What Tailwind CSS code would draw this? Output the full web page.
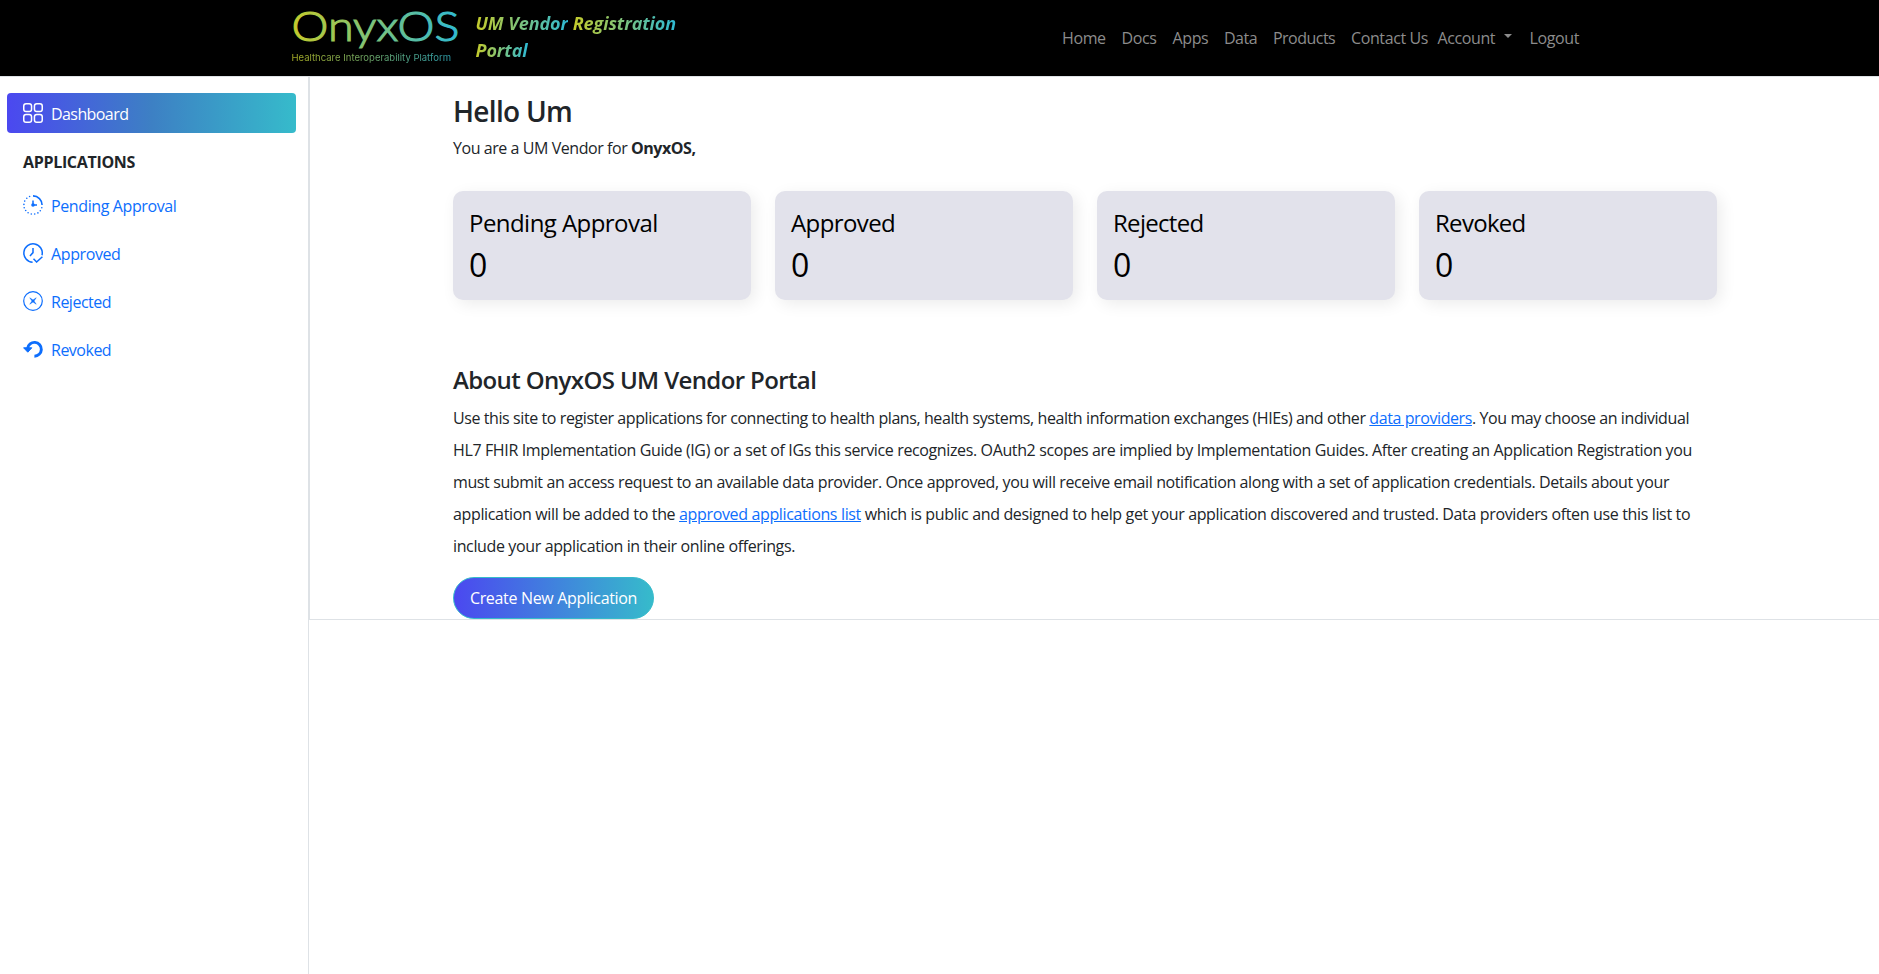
<!DOCTYPE html>
<html lang="en">
<head>
<meta charset="utf-8">
<title>OnyxOS UM Vendor Portal</title>
<script src="https://cdn.jsdelivr.net/npm/@tailwindcss/browser@4"></script>
</head>
<body class="flex h-screen flex-col overflow-hidden bg-white font-['Open_Sans',sans-serif] text-base text-[#212529] tracking-[-0.39px]">
  <header class="flex h-[77px] shrink-0 border-b border-[#dee2e6] bg-black pl-[290px]">
    <svg class="h-[76px] w-[172px] shrink-0" viewBox="290 0 172 76" letter-spacing="0">
      <defs>
        <linearGradient id="brand" gradientUnits="userSpaceOnUse" x1="292" y1="0" x2="460" y2="0">
          <stop offset="0" stop-color="#c5cb2b"/>
          <stop offset="1" stop-color="#2fbad4"/>
        </linearGradient>
      </defs>
      <text x="291.5" y="40.6" font-family="Lato" font-weight="300" font-size="41.5" textLength="168" lengthAdjust="spacingAndGlyphs" fill="url(#brand)" stroke="url(#brand)" stroke-width="1.1">OnyxOS</text>
      <text x="291.5" y="61" font-family="Inter" font-size="9.2" textLength="159.5" lengthAdjust="spacingAndGlyphs" fill="url(#brand)" opacity="0.82">Healthcare Interoperability Platform</text>
    </svg>
    <div class="ml-[13.5px] w-[220px] pt-[10px] text-[18px] leading-[27px] font-bold italic tracking-[-0.08px]">
      <span class="bg-[linear-gradient(90deg,#c5cb2b,#2fbad4)] bg-clip-text text-transparent">UM Vendor</span>
      <span class="bg-[linear-gradient(90deg,#c5cb2b,#2fbad4)] bg-clip-text text-transparent">Registration</span><br>
      <span class="bg-[linear-gradient(90deg,#c5cb2b,#2fbad4)] bg-clip-text text-transparent">Portal</span>
    </div>
    <nav class="ml-[366.5px] flex pt-[26px] leading-6 whitespace-nowrap text-[#8c8c8c]">
      <a class="w-[59.5px]">Home</a>
      <a class="w-[51px]">Docs</a>
      <a class="w-[51.5px]">Apps</a>
      <a class="w-[49px] tracking-[-0.5px]">Data</a>
      <a class="w-[78px] tracking-[-0.52px]">Products</a>
      <a class="w-[86.5px]">Contact Us</a>
      <a class="flex w-[92px]">Account<span class="mt-[8px] ml-[9px] h-0 border-x-[4.5px] border-t-[4.5px] border-x-transparent border-t-[#8c8c8c]"></span></a>
      <a>Logout</a>
    </nav>
  </header>

  <div class="flex min-h-0 flex-1">
    <aside class="w-[309px] shrink-0 border-r border-[#dee2e6] pt-4 pl-[7px]">
      <a class="flex h-10 w-[289px] items-center rounded bg-[linear-gradient(90deg,#4b48f0,#3d80c4_50%,#36bbcb)] pl-4 tracking-[-0.58px] text-white">
        <svg class="mr-2 size-5" viewBox="0 0 20 20" fill="none" stroke="currentColor" stroke-width="1.5">
          <rect x=".75" y=".75" width="7.8" height="7.8" rx="2.3"/><rect x="11.45" y=".75" width="7.8" height="7.8" rx="2.3"/><rect x=".75" y="11.45" width="7.8" height="7.8" rx="2.3"/><rect x="11.45" y="11.45" width="7.8" height="7.8" rx="2.3"/>
        </svg><span class="pt-px">Dashboard</span>
      </a>
      <h6 class="mt-[17px] pl-4 leading-6 font-bold tracking-[-0.32px]">APPLICATIONS</h6>
      <nav class="mt-[11px] text-[#0d6efd]">
        <a class="flex h-10 items-center pl-4">
          <svg class="mr-2 size-5" viewBox="0 0 20 20" fill="none" stroke="currentColor">
            <path d="M10 .9A9.1 9.1 0 0 1 19.1 10" stroke-width="1.6"/>
            <g fill="currentColor" stroke="none"><circle cx="18.8" cy="12.8" r=".8"/><circle cx="17.3" cy="15.8" r=".8"/><circle cx="14.9" cy="17.9" r=".8"/><circle cx="11.7" cy="19" r=".8"/><circle cx="8.3" cy="19" r=".8"/><circle cx="5.1" cy="17.7" r=".8"/><circle cx="2.7" cy="15.5" r=".8"/><circle cx="1.2" cy="12.7" r=".8"/><circle cx=".9" cy="9.4" r=".8"/><circle cx="1.7" cy="6.1" r=".8"/><circle cx="3.8" cy="3.3" r=".8"/><circle cx="6.6" cy="1.5" r=".8"/></g>
            <path d="M10 5.5V10h4" stroke-width="1.5"/><circle cx="10" cy="10" r="1.8" fill="currentColor" stroke="none"/>
          </svg><span class="pt-px">Pending Approval</span>
        </a>
        <a class="mt-2 flex h-10 items-center pl-4">
          <svg class="mr-2 size-5" viewBox="0 0 20 20" fill="none" stroke="currentColor" stroke-width="1.5">
            <path d="M9.6 19.2A9.2 9.2 0 1 1 19 12.2"/><path d="M10 5v4.6L7 13"/><path d="m10.5 15.8 3.1 3.2 5.8-5.2"/>
          </svg><span class="pt-px">Approved</span>
        </a>
        <a class="mt-2 flex h-10 items-center pl-4 tracking-[-0.5px]">
          <svg class="mr-2 size-5" viewBox="0 0 20 20" fill="none" stroke="currentColor">
            <circle cx="10" cy="10" r="9.3" stroke-width="1.2"/><path d="M6.8 6.8 10 9l3.2-2.2L11 10l2.2 3.2L10 11l-3.2 2.2L9 10z" fill="currentColor" stroke-width=".5"/>
          </svg><span class="pt-px">Rejected</span>
        </a>
        <a class="mt-2 flex h-10 items-center pl-4 tracking-[-0.5px]">
          <svg class="mr-2 size-5" viewBox="0 0 20 20" fill="none" stroke="currentColor">
            <path d="M4.6 9.4a6.9 6.9 0 1 1 6.8 7.8" stroke-width="2.9"/><path d="M.6 8.8h8.2L4.8 13.2z" fill="currentColor" stroke-linejoin="round"/>
          </svg><span class="pt-px">Revoked</span>
        </a>
      </nav>
    </aside>

    <main class="h-[543px] flex-1 border-b border-l border-[#dee2e6] pt-[18px] pl-[143px]">
      <h3 class="text-[28px] leading-[33px] font-semibold tracking-[-0.7px]">Hello Um</h3>
      <p class="mt-2 leading-6 tracking-[-0.44px]">You are a UM Vendor for <b>OnyxOS,</b></p>
      <section class="mt-[31px] flex gap-6 text-black">
        <div class="h-[109px] w-[298px] rounded-[10px] bg-[#e2e2eb] px-4 pt-[17px] shadow-[4px_4px_16px_rgba(0,0,0,0.08)]">
          <h4 class="text-2xl leading-[29px] tracking-[-0.55px]">Pending Approval</h4>
          <div class="mt-[9px] text-[32px] leading-[38px]">0</div>
        </div>
        <div class="h-[109px] w-[298px] rounded-[10px] bg-[#e2e2eb] px-4 pt-[17px] shadow-[4px_4px_16px_rgba(0,0,0,0.08)]">
          <h4 class="text-2xl leading-[29px] tracking-[-0.6px]">Approved</h4>
          <div class="mt-[9px] text-[32px] leading-[38px]">0</div>
        </div>
        <div class="h-[109px] w-[298px] rounded-[10px] bg-[#e2e2eb] px-4 pt-[17px] shadow-[4px_4px_16px_rgba(0,0,0,0.08)]">
          <h4 class="text-2xl leading-[29px] tracking-[-0.7px]">Rejected</h4>
          <div class="mt-[9px] text-[32px] leading-[38px]">0</div>
        </div>
        <div class="h-[109px] w-[298px] rounded-[10px] bg-[#e2e2eb] px-4 pt-[17px] shadow-[4px_4px_16px_rgba(0,0,0,0.08)]">
          <h4 class="text-2xl leading-[29px] tracking-[-0.7px]">Revoked</h4>
          <div class="mt-[9px] text-[32px] leading-[38px]">0</div>
        </div>
      </section>
      <h4 class="mt-[65px] text-2xl leading-[29px] font-semibold tracking-[-0.62px]">About OnyxOS UM Vendor Portal</h4>
      <p class="mt-2 leading-8 whitespace-nowrap">
        <span class="tracking-[-0.41px]">Use this site to register applications for connecting to health plans, health systems, health information exchanges (HIEs) and other <a class="text-[#0d6efd] underline">data providers</a>. You may choose an individual</span><br>
        <span class="tracking-[-0.371px]">HL7 FHIR Implementation Guide (IG) or a set of IGs this service recognizes. OAuth2 scopes are implied by Implementation Guides. After creating an Application Registration you</span><br>
        <span class="tracking-[-0.388px]">must submit an access request to an available data provider. Once approved, you will receive email notification along with a set of application credentials. Details about your</span><br>
        <span class="tracking-[-0.35px]">application will be added to the <a class="text-[#0d6efd] underline">approved applications list</a> which is public and designed to help get your application discovered and trusted. Data providers often use this list to</span><br>
        <span class="tracking-[-0.37px]">include your application in their online offerings.</span>
      </p>
      <button class="mt-[15px] h-[42px] w-[201px] rounded-full border border-[#36bbcb] bg-[linear-gradient(90deg,#4b48f0,#36bbcb)] tracking-[-0.33px] whitespace-nowrap text-white">Create New Application</button>
    </main>
  </div>
</body>
</html>
